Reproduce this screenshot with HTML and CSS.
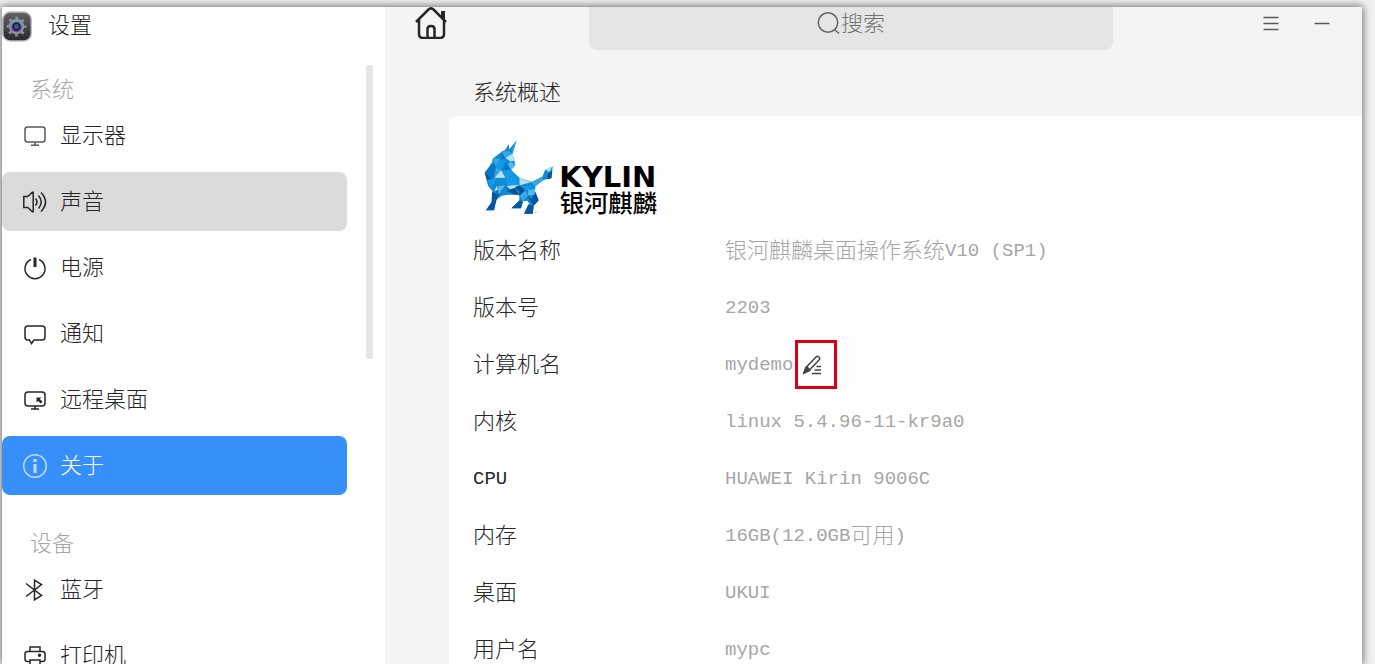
FILE: index.html
```
<!DOCTYPE html>
<html lang="zh-CN">
  <head>
    <meta charset="UTF-8" />
    <title>设置</title>
    <link rel="stylesheet" href="styles.css">
  </head>
  <body>
    <div class="window">
      <aside class="sidebar">
        <div class="app-title">
          <svg class="app-icon" viewBox="0 0 60 62">
            <defs>
              <linearGradient id="plate" x1="0" y1="0" x2="0" y2="1">
                <stop offset="0" stop-color="#636366" />
                <stop offset="1" stop-color="#29292b" />
              </linearGradient>
              <linearGradient id="ring" x1="0" y1="0" x2="0" y2="1">
                <stop offset="0" stop-color="#49a3e8" />
                <stop offset="1" stop-color="#6a35d8" />
              </linearGradient>
            </defs>
            <rect x="1.500" y="2" width="57" height="58" rx="15" fill="url(#plate)" stroke="#b5c0c6" stroke-width="3" />
            <circle cx="29" cy="31" r="15.500" fill="#90939a" />
            <circle cx="29" cy="31" r="17" fill="none" stroke="#90939a" stroke-width="6" stroke-dasharray="5 8.350" stroke-dashoffset="2.500" />
            <circle cx="29" cy="31" r="10" fill="#1b1a26" stroke="url(#ring)" stroke-width="3" />
            <circle cx="29" cy="31" r="5" fill="#555459" />
          </svg>
          <span class="cjk">设置</span>
        </div>
        <div class="sidebar-body">
          <nav class="menu">
            <div class="menu-label">系统</div>
            <a class="menu-item" href="#">
              <svg class="icon soft" viewBox="0 0 24 24"><rect x="2" y="3" width="20" height="15" rx="2.500" /><path d="M12 18v3M8 21.200h8" /></svg>
              <span class="cjk">显示器</span>
            </a>
            <a class="menu-item hover" href="#">
              <svg class="icon" viewBox="0 0 24 24"><path d="M.8 6.500h4l4.500-4.300h.9v19.600h-.9L4.800 17.500h-4zM12.500 8.500q3 3.500 0 7M15.500 5.500q5.500 6.500 0 13M18 2.500q9 9.500 0 19" /></svg>
              <span class="cjk">声音</span>
            </a>
            <a class="menu-item" href="#">
              <svg class="icon" viewBox="0 0 24 24"><path d="M8 3.500a10 10 0 1 0 8 0" /><path d="M12 1.500v9.500" stroke-width="3" /></svg>
              <span class="cjk">电源</span>
            </a>
            <a class="menu-item" href="#">
              <svg class="icon" viewBox="0 0 24 24"><path d="M5 4h14q3 0 3 3v8q0 3-3 3h-8l-2.500 3.500L6.500 18H5q-3 0-3-3V7q0-3 3-3z" /></svg>
              <span class="cjk">通知</span>
            </a>
            <a class="menu-item" href="#">
              <svg class="icon" viewBox="0 0 24 24"><rect x="2" y="4" width="20" height="14" rx="3" /><path d="M12 18v3M8 21h8" /><path d="M13.500 9.500h5l-1.600 1.600 2.600 2.600-1.800 1.800-2.600-2.600-1.600 1.600z" fill="#262626" stroke="none" /></svg>
              <span class="cjk">远程桌面</span>
            </a>
            <a class="menu-item active" href="#">
              <svg class="icon" viewBox="0 0 24 24"><circle cx="12" cy="12" r="11.300" stroke-width="1.400" /><path d="M12 10v9" stroke-width="3" /><path d="M12 5v3" stroke-width="3" /></svg>
              <span class="cjk">关于</span>
            </a>
            <div class="menu-label devices">设备</div>
            <a class="menu-item" href="#">
              <svg class="icon" viewBox="0 0 24 24"><path d="M3 5.500 18.500 17.500 11.500 21.800V2.200L18.500 6.500 3 18.500" /></svg>
              <span class="cjk">蓝牙</span>
            </a>
            <a class="menu-item" href="#">
              <svg class="icon" viewBox="0 0 24 24"><path d="M7 7.500V3h10v4.500M7 17.500H4.500Q2 17.500 2 15v-5q0-2.500 2.500-2.500h15Q22 7.500 22 10v5q0 2.500-2.500 2.500H17M7 16h10V22H7z" /><circle cx="16.500" cy="11.200" r="1" fill="#262626" /></svg>
              <span class="cjk">打印机</span>
            </a>
          </nav>
          <div class="scrollbar"></div>
        </div>
      </aside>

      <main class="content">
        <header class="topbar">
          <button class="icon-button home" aria-label="主页">
            <svg viewBox="0 0 32 32"><path d="M1 15 13.500 2.500q2.500-2.300 5 0L31 15M4 13v14q0 4 4 4h17q4 0 4-4V13M12.500 30V22q0-3 3.500-3t3.500 3v8" /><path d="M28 4v8" stroke-width="4" /></svg>
          </button>
          <label class="search">
            <svg viewBox="0 0 24 24"><circle cx="11" cy="11.500" r="9.700" /><path d="m17.500 18.500 4.500 4" /></svg>
            <input type="text" placeholder="搜索" />
          </label>
          <div class="window-buttons">
            <button class="icon-button" aria-label="菜单">
              <svg viewBox="0 0 16 16"><path d="M.5 1.500h15M.5 7.500h15M.5 13.500h15" /></svg>
            </button>
            <button class="icon-button" aria-label="最小化">
              <svg viewBox="0 0 16 16"><path d="M.5 7.500h15" /></svg>
            </button>
          </div>
        </header>

        <h1 class="page-title">系统概述</h1>

        <section class="card">
          <svg class="logo" viewBox="-21 0 561 246">
            <!-- body -->
            <path fill="#128bd3" d="M86 24 76 41 64 48 38 68 36 82 14 110 24 148 37 165 35 198 18 223H42L50 190 66 179 84 176 118 177V193L94 217H123L129 196 142 194 150 206 132 233H158L161 209 176 193 165 166 166 151 190 132 214 127 218 92 195 102 187 122 155 138 118 125 93 101 105 89 103 70 97 55 110 13 88 40z" />
            <path fill="#0754a2" d="M14 110 38 130 28 155zM36 168 58 175 48 195 35 198zM35 198 48 195 42 223H18zM32 82 48 90 37 130zM145 205 161 209 158 233H132zM120 193 128 198 123 217 94 217zM144 178 155 190 176 193 161 209 147 190z" />
            <path fill="#0878c5" d="M14 110 36 82 48 92 38 130zM64 48 82 44 76 65 64 70zM54 150 80 145 66 166 46 176zM80 152 117 148 104 167 80 166zM76 75 92 100 66 104z" />
            <path fill="#35a8e4" d="M38 68 62 68 48 92zM64 48 83 44 97 55 76 64zM48 92 66 104 44 122zM120 126 150 140 118 148zM164 150 190 132 186 123 155 138zM118 177 135 163 144 178 129 196zM97 38 110 13 98 52z" />
            <path fill="#119ce8" d="M58 70 78 74 66 102 48 91zM66 104 92 101 104 117 78 126zM22 132 52 125 30 160zM78 126 108 117 118 148 80 148zM135 150 164 150 144 165zM195 102 218 92 204 115z" />
            <path fill="#b5e1f2" d="M76 65 97 54 105 74 90 76zM64 103 76 126 43 125zM118 125 152 139 119 148zM80 150 117 146 106 155 90 160zM195 99 216 93 208 108zM50 150 43 166 54 161z" />
            <path fill="#07509a" d="M80 165 104 157 118 177 100 174zM118 163 135 163 118 180zM105 152 119 149 136 164 112 162zM165 166 176 193 155 190zM204 113 217 104 214 127 201 129z" />
            <path fill="#53bbea" d="M54 150 76 148 56 174zM92 76 105 89 93 101 84 86zM145 163 166 158 164 176 144 178z" />
            <circle cx="168" cy="229" r="2" fill="#777" />
            <text class="logo-name" x="238" y="153">KYLIN</text>
            <text class="logo-name-cn" x="239" y="227">银河麒麟</text>
          </svg>

          <dl class="info">
            <dt><span class="cjk">版本名称</span></dt>
            <dd><span class="cjk">银河麒麟桌面操作系统</span><span class="latin">V10 (SP1)</span></dd>
            <dt><span class="cjk">版本号</span></dt>
            <dd><span class="latin">2203</span></dd>
            <dt><span class="cjk">计算机名</span></dt>
            <dd>
              <span class="latin">mydemo</span>
              <button class="edit" aria-label="修改计算机名">
                <svg viewBox="0 0 20 20"><path d="M2 18 4 12.500 14 2q1.500-1.500 3 0t0 3L7 15.500zM5 12l3 3" /><path d="M2 18 4 12.500 7.500 15.500z" fill="#444" /><path d="M14.500 11.500H19M12.500 15H19M10 18.500h9" /></svg>
              </button>
            </dd>
            <dt><span class="cjk">内核</span></dt>
            <dd><span class="latin">linux 5.4.96-11-kr9a0</span></dd>
            <dt><span class="latin">CPU</span></dt>
            <dd><span class="latin">HUAWEI Kirin 9006C</span></dd>
            <dt><span class="cjk">内存</span></dt>
            <dd><span class="latin">16GB(12.0GB</span><span class="cjk">可用</span><span class="latin">)</span></dd>
            <dt><span class="cjk">桌面</span></dt>
            <dd><span class="latin">UKUI</span></dd>
            <dt><span class="cjk">用户名</span></dt>
            <dd><span class="latin">mypc</span></dd>
          </dl>
        </section>
      </main>
    </div>
  </body>
</html>
```

FILE: styles.css
```
* {
  box-sizing: border-box;
}
body {
  margin: 0;
  height: 100vh;
  overflow: hidden;
  padding: 7px 13px 0 2px;
  background-color: #f1f1f1;
  font-family: "Noto Sans CJK SC", sans-serif;
  font-size: 22px;
  font-weight: 300;
  line-height: 28px;
  color: #262626;
}
svg {
  display: block;
  flex: none;
  fill: none;
  stroke: #262626;
  stroke-width: 1.5;
}
button {
  padding: 0;
  border: 0;
  background: none;
  cursor: pointer;
}
.window {
  display: flex;
  height: 100%;
  overflow: hidden;
  background-color: #f4f4f4;
  box-shadow: 0 0 8px 1px rgba(0, 0, 0, 0.55);
}
/* the CJK glyphs sit low in their line box */
.cjk {
  padding-bottom: 6px;
}
.latin {
  font-family: "Liberation Mono", monospace;
  font-size: 19px;
}

/* sidebar */
.sidebar {
  flex: none;
  display: flex;
  flex-direction: column;
  width: 383px;
  background-color: #fff;
}
.app-title {
  display: flex;
  align-items: center;
  gap: 16px;
  height: 38px;
  padding-top: 2px;
}
.app-icon {
  width: 30px;
  height: 31px;
  stroke: none;
}
.sidebar-body {
  display: flex;
  justify-content: space-between;
  padding: 22px 12px 0 0;
}
.menu {
  width: 345px;
}
.menu-label {
  height: 34px;
  margin-top: 7px;
  padding-left: 28px;
  line-height: 30px;
  color: #a6a6a6;
}
.devices {
  margin-top: 31px;
}
.menu-item {
  display: flex;
  align-items: center;
  gap: 13px;
  height: 59px;
  margin-bottom: 7px;
  padding-left: 21px;
  border-radius: 8px;
  color: #262626;
  text-decoration: none;
}
.icon {
  width: 24px;
  height: 24px;
}
.soft {
  stroke: #595959;
}
.hover {
  background-color: #dbdbdb;
}
.active {
  background-color: #3790fa;
  color: #fff;
}
.active .icon {
  stroke: #c3ddfd;
}
.scrollbar {
  width: 7px;
  height: 294px;
  border-radius: 3px;
  background-color: #e6e6e6;
}

/* content */
.content {
  flex: 1;
  min-width: 0;
}
.topbar {
  display: flex;
  align-items: flex-start;
  padding: 0 32px 0 30px;
}
.home svg {
  width: 32px;
  height: 32px;
  stroke-width: 2.5;
}
.search {
  flex: 1;
  display: flex;
  justify-content: center;
  height: 43px;
  margin: 0 150px 0 142px;
  border-radius: 0 0 8px 8px;
  background-color: #e5e5e5;
}
.search svg {
  width: 24px;
  height: 24px;
  margin-top: 4px;
  stroke: #666;
}
.search input {
  width: 44px;
  height: 28px;
  padding: 0;
  border: 0;
  outline: 0;
  background: none;
  font: inherit;
}
.search input::placeholder {
  color: #6f7477;
}
.window-buttons {
  display: flex;
  gap: 35px;
  padding-top: 9px;
}
.window-buttons svg {
  width: 16px;
  height: 16px;
  stroke: #595959;
}
.page-title {
  margin: 26px 0 12px 88px;
  font-size: 22px;
  font-weight: 300;
  line-height: 28px;
}
.card {
  margin-left: 64px;
  padding: 20px 24px;
  border-radius: 8px 0 0 0;
  background-color: #fff;
}
.logo {
  width: 187px;
  height: 82px;
  stroke: none;
}
.logo-name {
  font-family: "DejaVu Sans", sans-serif;
  font-size: 87px;
  font-weight: bold;
  fill: #000;
}
.logo-name-cn {
  font-size: 73px;
  font-weight: 500;
  fill: #000;
}
.info {
  display: grid;
  grid-template-columns: 252px 1fr;
  grid-auto-rows: 57px;
  align-items: center;
  margin: 4px 0 0;
}
.info dt,
.info dd {
  display: flex;
  align-items: center;
  margin: 0;
}
.info dd {
  color: #a6a6a6;
}
.edit {
  display: flex;
  align-items: center;
  width: 42px;
  height: 49px;
  margin-left: 2px;
  padding-left: 4px;
  border: 3px solid #dc0012;
}
.edit svg {
  width: 20px;
  height: 20px;
  stroke: #444;
}
```
